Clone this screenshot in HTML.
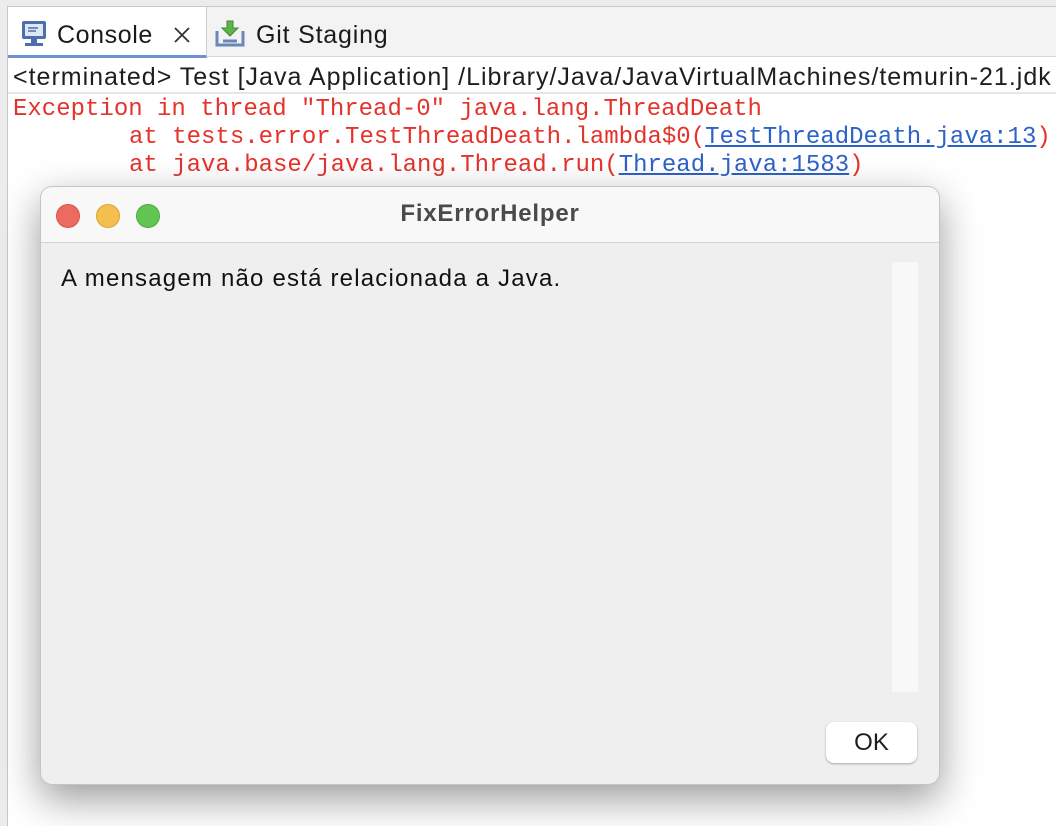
<!DOCTYPE html>
<html><head><meta charset="utf-8"><style>
*{margin:0;padding:0;box-sizing:border-box}
body{width:1056px;height:812px;background:#ececec;position:relative;overflow:hidden;font-family:"Liberation Sans",sans-serif}
.pane{position:absolute;left:7px;top:6px;width:1060px;height:820px;background:#fff;border-left:1px solid #c8c8c8;border-top:1px solid #c8c8c8}
.tabs{position:absolute;left:0;top:0;right:0;height:50px;background:#f3f3f3;border-bottom:1px solid #d6d6d6}
.tab1{position:absolute;left:0;top:0;width:199px;height:51px;background:#fff;border-right:1px solid #d0d0d0;border-bottom:3px solid #6f8fd6}
.t{position:absolute;font-size:25px;color:#1a1a1a;top:14px}
.term{position:absolute;left:5px;top:56px;font-size:25px;letter-spacing:1px;color:#1e1e1e;white-space:nowrap}
.sep{position:absolute;left:0;right:0;top:85px;border-top:2px solid #e6e6e6}
.mono{position:absolute;font-family:"Liberation Mono",monospace;font-size:24px;color:#e5322a;white-space:pre;line-height:28px}
.mono a{color:#2d62c8;text-decoration:underline}
.dlg{position:absolute;left:40px;top:186px;width:900px;height:599px;border-radius:12px;background:#efefef;border:1px solid #c4c4c4;box-shadow:0 14px 40px rgba(0,0,0,.4);overflow:hidden}
.tb{height:56px;background:#f8f8f8;border-bottom:1px solid #d4d4d4;position:relative}
.dot{position:absolute;top:17px;width:24px;height:24px;border-radius:50%}
.title{position:absolute;left:0;right:0;top:13px;text-align:center;font-weight:bold;font-size:24px;letter-spacing:.8px;color:#4a4a4a}
.msg{position:absolute;left:20px;top:78px;font-size:24px;letter-spacing:1.2px;color:#111}
.sb{position:absolute;left:851px;top:75px;width:26px;height:430px;background:#f8f8f8}
.ok{position:absolute;left:785px;top:535px;width:91px;height:41px;background:#fff;border-radius:8px;box-shadow:0 1px 2px rgba(0,0,0,.3);font-size:24px;text-align:center;line-height:41px;color:#1e1e1e}
</style></head><body>
<div class="pane">
 <div class="tabs">
  <div class="tab1"></div>
  <svg style="position:absolute;left:13px;top:13px" width="26" height="28" viewBox="0 0 26 28"><rect x="1" y="1" width="24" height="18" rx="2" fill="#4d6fb0"/><rect x="4" y="4" width="18" height="12" fill="#dfe7f5"/><path d="M7 8h10M7 11h8" stroke="#4d6fb0" stroke-width="1.5"/><rect x="10" y="19" width="6" height="4" fill="#4d6fb0"/><rect x="4" y="23" width="18" height="3" fill="#4d6fb0"/></svg>
  <div class="t" style="left:49px;letter-spacing:.6px">Console</div>
  <svg style="position:absolute;left:165px;top:19px" width="18" height="18"><path d="M2 2L16 16M16 2L2 16" stroke="#333" stroke-width="1.8"/></svg>
  <svg style="position:absolute;left:206px;top:12px" width="34" height="30" viewBox="0 0 34 30"><path d="M3 12v14h26V12" fill="none" stroke="#6b86b8" stroke-width="3"/><path d="M9 22h14" stroke="#6b86b8" stroke-width="3"/><path d="M13 2h6v7h5l-8 8-8-8h5z" fill="#5fb44a" stroke="#3d8a30"/></svg>
  <div class="t" style="left:248px;letter-spacing:.8px">Git Staging</div>
 </div>
 <div class="term">&lt;terminated&gt; Test [Java Application] /Library/Java/JavaVirtualMachines/temurin-21.jdk</div>
 <div class="sep"></div>
 <div class="mono" style="left:5px;top:89px">Exception in thread "Thread-0" java.lang.ThreadDeath</div>
 <div class="mono" style="left:121px;top:117px">at tests.error.TestThreadDeath.lambda$0(<a>TestThreadDeath.java:13</a>)</div>
 <div class="mono" style="left:121px;top:145px">at java.base/java.lang.Thread.run(<a>Thread.java:1583</a>)</div>
</div>
<div class="dlg">
 <div class="tb">
  <div class="dot" style="left:15px;background:#ed6a5e;border:1px solid #d5544a"></div>
  <div class="dot" style="left:55px;background:#f5bf4f;border:1px solid #d9a33a"></div>
  <div class="dot" style="left:95px;background:#61c554;border:1px solid #4ca83f"></div>
  <div class="title">FixErrorHelper</div>
 </div>
 <div class="msg">A mensagem não está relacionada a Java.</div>
 <div class="sb"></div>
 <div class="ok">OK</div>
</div>
</body></html>
